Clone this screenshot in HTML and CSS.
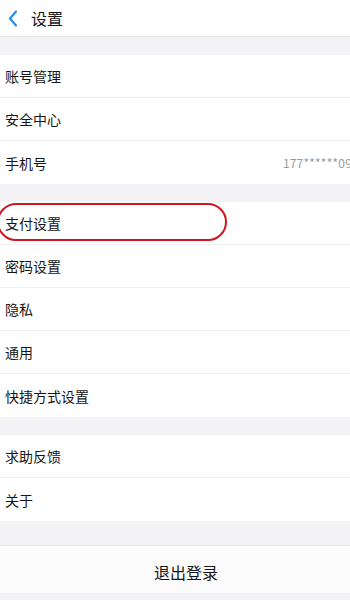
FILE: index.html
```html
<!DOCTYPE html>
<html lang="zh">
<head>
<meta charset="utf-8">
<link rel="stylesheet" href="styles.css">
</head>
<body>
<div class="page">
  <header class="topbar">
    <svg class="back" width="10" height="17" viewBox="0 0 10 17"><path d="M8 1.5 L2 8.5 L8 15.5" fill="none" stroke="#2a8ee6" stroke-width="2.2" stroke-linecap="round" stroke-linejoin="round"/></svg>
    <span class="title">设置</span>
  </header>
  <div class="gap g1"></div>
  <div class="group">
    <div class="row">账号管理</div>
    <div class="row">安全中心</div>
    <div class="row last"><span>手机号</span><span class="value">177******09</span></div>
  </div>
  <div class="gap g1"></div>
  <div class="group">
    <div class="row mark">支付设置<span class="oval"></span></div>
    <div class="row">密码设置</div>
    <div class="row">隐私</div>
    <div class="row">通用</div>
    <div class="row last">快捷方式设置</div>
  </div>
  <div class="gap g1"></div>
  <div class="group">
    <div class="row">求助反馈</div>
    <div class="row last">关于</div>
  </div>
  <div class="gap g2"></div>
  <div class="logout">退出登录</div>
  <div class="gap g3"></div>
</div>
</body>
</html>
```
FILE: styles.css
```css
* { box-sizing: border-box; }
html, body { margin: 0; padding: 0; }
body {
  width: 350px;
  height: 600px;
  overflow: hidden;
  background: #f3f3f6;
  font-family: "Noto Sans CJK SC", "Noto Sans", sans-serif;
  color: #161616;
}
.page { display: flex; flex-direction: column; }
.topbar {
  height: 37px;
  background: #fff;
  display: flex;
  align-items: center;
  padding-left: 8px;
  gap: 13px;
  border-bottom: 1px solid #e6e6ea;
}
.title { font-size: 16px; line-height: 1; }
.gap { background: #f3f3f6; }
.g1 { height: 18px; }
.g2 { height: 24px; }
.g3 { height: 10px; }
.group { background: #fff; }
.row {
  height: 43px;
  display: flex;
  align-items: center;
  justify-content: space-between;
  padding-left: 5px;
  font-size: 14px;
  border-bottom: 1px solid #f0f0f2;
  position: relative;
}
.row.last { border-bottom: none; }
.value {
  font-size: 12px;
  color: #9a9a9a;
  margin-right: -2px;
  letter-spacing: 0.2px;
}
.oval {
  position: absolute;
  left: -3px;
  top: 1px;
  width: 230px;
  height: 38px;
  border: 2.5px solid #cf151c;
  border-radius: 19px;
}
.logout {
  height: 48px;
  background: #fbfbfc;
  border-top: 1px solid #e8e8ec;
  display: flex;
  align-items: center;
  justify-content: center;
  padding-left: 22px;
  padding-top: 4px;
  font-size: 16px;
  color: #161616;
}
```
